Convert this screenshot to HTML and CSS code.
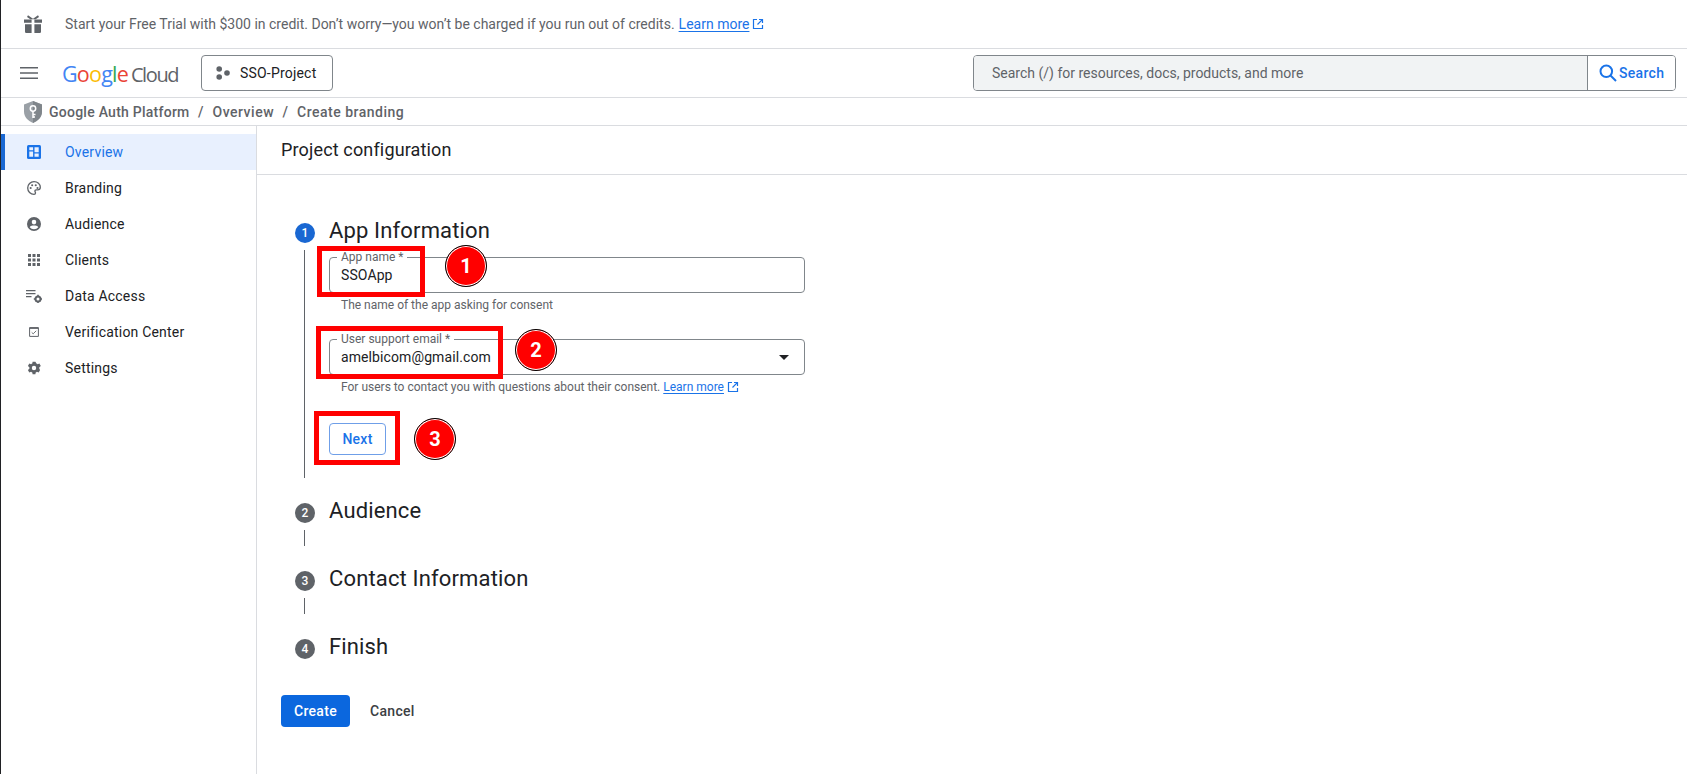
FILE: index.html
```html
<!DOCTYPE html>
<html lang="en">
<head>
<meta charset="utf-8">
<title>Create branding</title>
<link rel="stylesheet" href="styles.css">
</head>
<body>
<div class="app">
  <div class="banner">
    <svg class="gift" viewBox="0 0 18 18"><path d="M0 4.500h7.600v3.300H0zM10.400 4.500H18v3.300h-7.600zM1 9.200h6.600V18H2.200A1.200 1.200 0 0 1 1 16.800zM10.400 9.200H17v7.600a1.200 1.200 0 0 1-1.200 1.200h-5.400z"/><path d="M4 .3l5 3.400 5-3.400 1 1.600-3.300 2.300H6.300L3 1.900z"/></svg>
    <span>Start your Free Trial with $300 in credit. Don’t worry—you won’t be charged if you run out of credits.</span>
    <a class="link banner-link">Learn more</a>
    <svg class="ext" viewBox="0 0 12 12"><path d="M5 1.500H1.500v9h9V7M7 1.500h3.500V5M10.300 1.700L5.500 6.500" fill="none" stroke="currentColor" stroke-width="1.200"/></svg>
  </div>
  <header class="topbar">
    <svg class="menu" viewBox="0 0 18 12"><path d="M0 0h18v1.600H0zM0 5.200h18v1.600H0zM0 10.400h18V12H0z"/></svg>
    <div class="logo"><span class="g-b">G</span><span class="g-r">o</span><span class="g-y">o</span><span class="g-b">g</span><span class="g-g">l</span><span class="g-r">e</span><span class="cloud">Cloud</span></div>
    <button class="project">
      <svg class="project-icon" viewBox="0 0 14 14"><circle cx="3.200" cy="3" r="2.800"/><circle cx="3.200" cy="11" r="2.800"/><circle cx="11" cy="7" r="2.800"/></svg>
      SSO-Project
    </button>
    <div class="search">
      <div class="search-input">Search (/) for resources, docs, products, and more</div>
      <button class="search-btn">
        <svg viewBox="0 0 18 18"><circle cx="7.300" cy="7.300" r="5.800" fill="none" stroke="currentColor" stroke-width="2"/><path d="M11.500 11.500l5.500 5.500" fill="none" stroke="currentColor" stroke-width="2"/></svg>
        Search
      </button>
    </div>
  </header>
  <nav class="crumbs">
    <svg class="shield" viewBox="0 0 18 22"><path d="M9 0l9 3.400v7.200c0 5.300-3.800 9.500-9 11.400-5.200-1.900-9-6.100-9-11.400V3.400z" fill="#9aa0a6"/><path d="M9 0l9 3.400v7.200c0 5.300-3.800 9.500-9 11.400z" fill="#80868b"/><circle cx="9" cy="7.500" r="2.700" fill="none" stroke="#fff" stroke-width="1.500"/><path d="M9 10v7M9 13.500h2.500M9 16h2" fill="none" stroke="#fff" stroke-width="1.500"/></svg>
    <span class="crumb-root">Google Auth Platform</span><i>/</i><span>Overview</span><i>/</i><span>Create branding</span>
  </nav>
  <div class="body">
    <aside class="sidebar">
      <a class="item active">
        <svg class="ico" viewBox="0 0 14 14"><rect width="14" height="14" rx="1.500"/><path d="M2.300 2.300h3.800v3H2.300zM2.300 6.500h3.800v5.200H2.300zM7.500 2.300h4.200v4.900H7.500zM7.500 8.400h4.200v3.300H7.500z" fill="#e8f0fe"/></svg>
        Overview
      </a>
      <a class="item">
        <svg class="ico" viewBox="0 0 16 16"><path d="M8 .8a7.200 7.200 0 0 0 0 14.400c1.100 0 1.700-.8 1.700-1.600 0-.9-.7-1.300-.7-2.100 0-.8.600-1.300 1.400-1.300h1.700c2 0 3.100-1.400 3.100-3C15.200 3.400 12 .8 8 .8z" fill="none" stroke="currentColor" stroke-width="1.500"/><circle cx="4.200" cy="8" r="1.200"/><circle cx="5.900" cy="4.800" r="1.200"/><circle cx="10" cy="4.800" r="1.200"/><circle cx="12" cy="8" r="1.200"/></svg>
        Branding
      </a>
      <a class="item">
        <svg class="ico" viewBox="0 0 14 14"><path d="M7 0a7 7 0 1 0 0 14A7 7 0 0 0 7 0zm0 2.800a2.300 2.300 0 1 1 0 4.600 2.300 2.300 0 0 1 0-4.600zm0 9.500a5.500 5.500 0 0 1-4.300-2.100C3.400 9 5.500 8.600 7 8.600s3.600.4 4.300 1.600A5.500 5.500 0 0 1 7 12.300z"/></svg>
        Audience
      </a>
      <a class="item">
        <svg class="ico ico-grid" viewBox="0 0 12 12"><path d="M0 0h3v3H0zM4.500 0h3v3h-3zM9 0h3v3H9zM0 4.500h3v3H0zM4.500 4.500h3v3h-3zM9 4.500h3v3H9zM0 9h3v3H0zM4.500 9h3v3h-3zM9 9h3v3H9z"/></svg>
        Clients
      </a>
      <a class="item">
        <svg class="ico ico-data" viewBox="0 0 16 13"><path d="M0 0h9.500v1.200H0zM0 3h9.500v1.200H0zM0 6h5.500v1.200H0z"/><circle cx="12" cy="9" r="2.500" fill="none" stroke="currentColor" stroke-width="2"/><path d="M11.200 4.800h1.600v1.700h-1.600zM11.200 11.500h1.600V13h-1.600zM7.800 8.200h1.700v1.600H7.800zM14.500 8.200H16v1.600h-1.500z"/></svg>
        Data Access
      </a>
      <a class="item">
        <svg class="ico ico-check" viewBox="0 0 10 10"><path d="M.6.600h8.800v8.800H.6z" fill="none" stroke="currentColor"/><path d="M2.700 5.400l1.500 1.400 3-3" fill="none" stroke="currentColor" stroke-width=".9"/><path d="M.6.600h8.800v1.300H.6z"/></svg>
        Verification Center
      </a>
      <a class="item">
        <svg class="ico" viewBox="0 0 14 14"><path d="M12.300 7.700a5 5 0 0 0 0-1.400l1.500-1.200-1.400-2.500-1.800.7a5.400 5.400 0 0 0-1.200-.7L8.400.7H5.600l-.3 1.900c-.4.200-.8.400-1.200.7l-1.800-.7L.9 5.100l1.500 1.200a5 5 0 0 0 0 1.400L.9 8.900l1.400 2.500 1.800-.7c.4.300.8.500 1.200.7l.3 1.900h2.800l.3-1.900c.4-.2.800-.4 1.200-.7l1.800.7 1.400-2.500zM7 9.200a2.200 2.200 0 1 1 0-4.400 2.200 2.200 0 0 1 0 4.400z"/></svg>
        Settings
      </a>
    </aside>
    <main class="main">
      <h1 class="page-title">Project configuration</h1>
      <div class="content">
        <section class="step">
          <div class="step-head"><span class="num num-on">1</span><h2>App Information</h2></div>
          <div class="step-body step-body-open">
            <div class="field">
              <div class="outline"><span class="legend">App name *</span><span class="value">SSOApp</span></div>
              <p class="hint">The name of the app asking for consent</p>
            </div>
            <div class="field">
              <div class="outline"><span class="legend">User support email *</span><span class="value">amelbicom@gmail.com</span><span class="caret"></span></div>
              <p class="hint">For users to contact you with questions about their consent. <a class="link">Learn more</a><svg class="ext" viewBox="0 0 12 12"><path d="M5 1.500H1.500v9h9V7M7 1.500h3.500V5M10.300 1.700L5.500 6.500" fill="none" stroke="currentColor" stroke-width="1.200"/></svg></p>
            </div>
            <button class="next">Next</button>
          </div>
        </section>
        <section class="step">
          <div class="step-head"><span class="num">2</span><h2>Audience</h2></div>
          <div class="step-body"></div>
        </section>
        <section class="step">
          <div class="step-head"><span class="num">3</span><h2>Contact Information</h2></div>
          <div class="step-body"></div>
        </section>
        <section class="step">
          <div class="step-head"><span class="num">4</span><h2>Finish</h2></div>
        </section>
        <div class="actions">
          <button class="create">Create</button>
          <button class="cancel">Cancel</button>
        </div>
      </div>
    </main>
  </div>
  <div class="mark box-1"></div>
  <div class="mark box-2"></div>
  <div class="mark box-3"></div>
  <div class="badge badge-1">1</div>
  <div class="badge badge-2">2</div>
  <div class="badge badge-3">3</div>
</div>
</body>
</html>
```
FILE: styles.css
```css
* { box-sizing: border-box; }
html, body { margin: 0; height: 100%; }
body { font-family: Roboto, "Liberation Sans", sans-serif; color: #202124; background: #fff; overflow: hidden; }
.app { position: relative; height: 100vh; display: flex; flex-direction: column; border-left: 1px solid #202124; }
button { font-family: inherit; cursor: pointer; }

.banner { height: 49px; flex: none; display: flex; align-items: center; padding-left: 23px; border-bottom: 1px solid #dadce0; font-size: 14px; color: #5f6368; }
.gift { width: 18px; height: 18px; margin-right: 23px; fill: #5f6368; }
.link { color: #1a73e8; text-decoration: underline; text-underline-offset: 2px; }
.banner-link { margin-left: 4px; }
.ext { width: 12px; height: 12px; color: #1a73e8; margin-left: 3px; vertical-align: -2px; }

.topbar { height: 49px; flex: none; display: flex; align-items: center; border-bottom: 1px solid #dadce0; padding: 0 11px 0 19px; }
.menu { width: 18px; height: 12px; fill: #5f6368; margin-right: 24px; }
.logo { width: 139px; display: flex; align-items: baseline; font-family: "Open Sans", sans-serif; font-size: 21.5px; letter-spacing: -0.8px; white-space: nowrap; }
.g-b { color: #4285f4; } .g-r { color: #ea4335; } .g-y { color: #fbbc04; } .g-g { color: #34a853; }
.cloud { color: #5f6368; font-size: 20px; letter-spacing: -1.4px; margin-left: 3px; }
.project { height: 36px; width: 132px; display: flex; align-items: center; padding: 0 0 0 14px; background: #fff; border: 1px solid #80868b; border-radius: 4px; font-size: 14px; letter-spacing: .2px; color: #202124; }
.project-icon { width: 14px; height: 14px; fill: #5f6368; margin-right: 10px; }
.search { margin-left: auto; width: 703px; height: 36px; display: flex; border: 1px solid #80868b; border-radius: 4px; overflow: hidden; }
.search-input { flex: 1; background: #f1f3f4; display: flex; align-items: center; padding-left: 18px; font-size: 14px; color: #5f6368; }
.search-btn { width: 88px; display: flex; align-items: center; gap: 2px; padding: 0 0 0 11px; background: #fff; border: 0; border-left: 1px solid #80868b; color: #1a73e8; font-size: 14px; font-weight: 500; letter-spacing: .3px; }
.search-btn svg { width: 18px; height: 18px; }

.crumbs { height: 28px; flex: none; display: flex; align-items: center; padding-left: 23px; border-bottom: 1px solid #dadce0; font-size: 14px; font-weight: 500; color: #5f6368; letter-spacing: .5px; }
.crumb-root { letter-spacing: .25px; }
.shield { width: 18px; height: 22px; margin-right: 7px; }
.crumbs i { font-style: normal; margin: 0 8.500px; }

.body { flex: 1; display: flex; min-height: 0; }
.sidebar { width: 256px; flex: none; border-right: 1px solid #dadce0; padding-top: 8px; }
.item { height: 36px; display: flex; align-items: center; padding-left: 21px; font-size: 14px; letter-spacing: .2px; color: #202124; border-left: 4px solid transparent; }
.item.active { background: #e8f0fe; color: #1a73e8; border-left-color: #1967d2; }
.ico { width: 14px; height: 14px; flex: none; margin-right: 24px; margin-left: 1px; fill: #5f6368; color: #5f6368; }
.active .ico { fill: #1a73e8; }
.ico-grid { width: 12px; height: 12px; margin-left: 2px; margin-right: 25px; }
.ico-data { width: 16px; height: 13px; margin-left: 0; margin-right: 23px; }
.ico-check { width: 10px; height: 10px; margin-left: 3px; margin-right: 26px; }

.main { flex: 1; min-width: 0; }
.page-title { height: 49px; margin: 0; padding: 0 0 2px 24px; display: flex; align-items: center; font-size: 18px; font-weight: 400; letter-spacing: .15px; color: #202124; border-bottom: 1px solid #dadce0; }
.content { padding: 39px 0 0 24px; }

.step { margin-left: 14px; }
.step-head { display: flex; align-items: center; height: 32px; }
.num { width: 20px; height: 20px; flex: none; margin-right: 14px; margin-top: 5px; border-radius: 50%; background: #5f6368; color: #fff; font-size: 12px; font-weight: 500; display: flex; align-items: center; justify-content: center; }
.num-on { background: #1967d2; }
.step-head h2 { margin: 0; font-size: 22px; font-weight: 400; letter-spacing: .15px; color: #202124; }
.step-body { margin: 4px 0 16px 9px; border-left: 1px solid #5f6368; height: 16px; }
.step-body-open { height: auto; padding: 7px 0 23px 24px; }

.field { margin-bottom: 26px; }
.outline { position: relative; height: 36px; width: 476px; border: 1px solid #80868b; border-radius: 4px; display: flex; align-items: center; padding-left: 11px; font-size: 14px; }
.legend { position: absolute; top: -8px; left: 7px; padding: 0 4px; background: #fff; font-size: 12px; line-height: 14px; color: #5f6368; }
.value { letter-spacing: .1px; color: #202124; }
.caret { position: absolute; right: 15px; top: 15px; border: 5px solid transparent; border-top-color: #202124; border-bottom: 0; }
.hint { margin: 4px 0 0 12px; font-size: 12px; line-height: 16px; color: #5f6368; }
.next { display: block; width: 57px; height: 32px; margin-top: 28px; background: #fff; border: 1px solid #6f9fe8; border-radius: 4px; color: #1a73e8; font-size: 14px; font-weight: 500; padding: 0; letter-spacing: .25px; }

.actions { display: flex; align-items: center; margin-top: 33px; }
.create { width: 69px; height: 32px; background: #0b67de; color: #fff; border: 0; border-radius: 4px; font-size: 14px; font-weight: 500; padding: 0; letter-spacing: .3px; }
.cancel { background: none; border: 0; margin-left: 20px; padding: 0; font-size: 14px; font-weight: 500; letter-spacing: .3px; color: #3c4043; }

.mark { position: absolute; border: 5px solid #f00; }
.box-1 { left: 316px; top: 246px; width: 108px; height: 51px; }
.box-2 { left: 315px; top: 326px; width: 187px; height: 53px; }
.box-3 { left: 313px; top: 411px; width: 86px; height: 54px; }
.badge { position: absolute; width: 42px; height: 42px; border-radius: 50%; background: #f00; border: 1px solid #000; box-shadow: inset 0 0 0 1px #fff; color: #fff; font-weight: 700; font-size: 20px; display: flex; align-items: center; justify-content: center; }
.badge-1 { left: 444px; top: 245px; }
.badge-2 { left: 514px; top: 329px; }
.badge-3 { left: 413px; top: 418px; }
```
